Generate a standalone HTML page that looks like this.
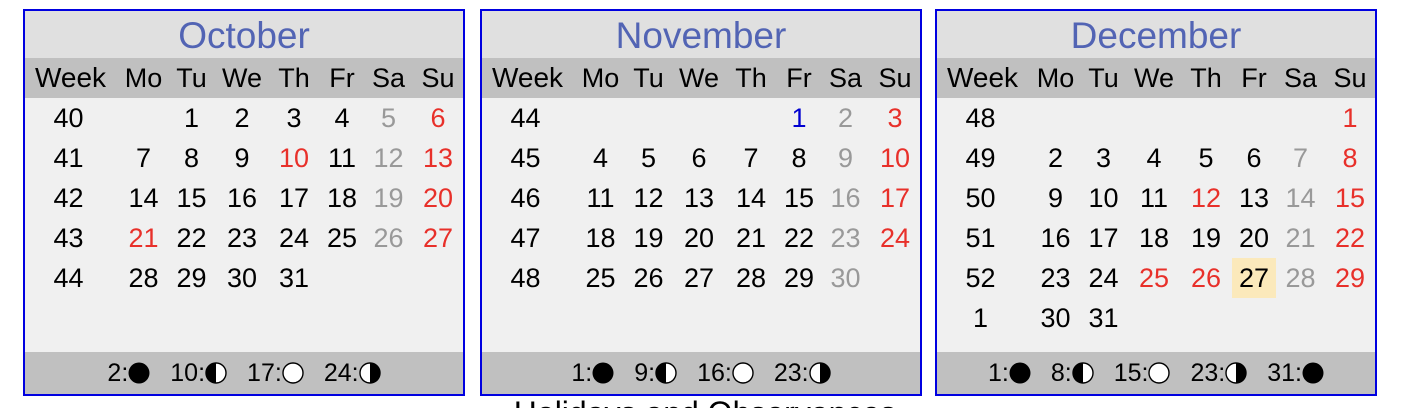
<!DOCTYPE html>
<html style="height:408px;overflow:hidden"><head><meta charset="utf-8"><style>
body{margin:0;width:1410px;height:408px;overflow:hidden;background:#fff;font-family:"Liberation Sans",Arial,sans-serif;position:relative}
.p{position:absolute;top:9px;width:438px;height:383px;border:2px solid #0000e0;background:#f0f0f0}
.t{height:47px;background:#e0e0e0;color:#5264b4;font-size:37px;text-align:center;line-height:50px}
table{border-collapse:collapse;table-layout:fixed;width:438px}
td{padding:0;text-align:center;font-size:27px;height:40px;line-height:40px;color:#000;white-space:nowrap;overflow:visible}
td:first-child{padding-right:8px}
tr.h td{background:#c0c0c0;height:40px;font-size:27px}
tr.h td:first-child{font-size:28px;padding-right:4px}
.r{color:#e8302a}.g{color:#999}.b{color:#0000d0}.hl{background:#fbe9bb}
.f{position:absolute;left:0;right:0;bottom:0;height:42px;background:#c0c0c0;text-align:center;font-size:25px;line-height:42px}
.f svg{vertical-align:-3px;margin-right:20px}
.bt{position:absolute;top:395px;left:0;width:1410px;text-align:center;font-size:32px}
</style></head><body>
<svg width="0" height="0" style="position:absolute"><defs>
<g id="n"><circle cx="11" cy="11" r="10.5" fill="#000"/></g>
<g id="fq"><circle cx="11" cy="11" r="10" fill="#fff" stroke="#000" stroke-width="1.4"/><path d="M11 1A10 10 0 0 0 11 21Z" fill="#000"/></g>
<g id="fu"><circle cx="11" cy="11" r="10" fill="#fff" stroke="#000" stroke-width="1.4"/></g>
<g id="lq"><circle cx="11" cy="11" r="10" fill="#fff" stroke="#000" stroke-width="1.4"/><path d="M11 1A10 10 0 0 1 11 21Z" fill="#000"/></g>
</defs></svg>

<div class="p" style="left:23px">
<div class="t">October</div>
<table><colgroup><col style="width:95px"><col style="width:47px"><col style="width:49px"><col style="width:52px"><col style="width:52px"><col style="width:44px"><col style="width:49px"><col style="width:50px"></colgroup>
<tr class="h"><td>Week</td><td>Mo</td><td>Tu</td><td>We</td><td>Th</td><td>Fr</td><td>Sa</td><td>Su</td></tr>
<tr><td>40</td><td></td><td>1</td><td>2</td><td>3</td><td>4</td><td class="g">5</td><td class="r">6</td></tr>
<tr><td>41</td><td>7</td><td>8</td><td>9</td><td class="r">10</td><td>11</td><td class="g">12</td><td class="r">13</td></tr>
<tr><td>42</td><td>14</td><td>15</td><td>16</td><td>17</td><td>18</td><td class="g">19</td><td class="r">20</td></tr>
<tr><td>43</td><td class="r">21</td><td>22</td><td>23</td><td>24</td><td>25</td><td class="g">26</td><td class="r">27</td></tr>
<tr><td>44</td><td>28</td><td>29</td><td>30</td><td>31</td><td></td><td></td><td></td></tr>
</table>
<div class="f">2:<svg width="22" height="22"><use href="#n"/></svg>10:<svg width="22" height="22"><use href="#fq"/></svg>17:<svg width="22" height="22"><use href="#fu"/></svg>24:<svg width="22" height="22" style="margin-right:0"><use href="#lq"/></svg></div>
</div>

<div class="p" style="left:480px">
<div class="t">November</div>
<table><colgroup><col style="width:95px"><col style="width:47px"><col style="width:49px"><col style="width:52px"><col style="width:52px"><col style="width:44px"><col style="width:49px"><col style="width:50px"></colgroup>
<tr class="h"><td>Week</td><td>Mo</td><td>Tu</td><td>We</td><td>Th</td><td>Fr</td><td>Sa</td><td>Su</td></tr>
<tr><td>44</td><td></td><td></td><td></td><td></td><td class="b">1</td><td class="g">2</td><td class="r">3</td></tr>
<tr><td>45</td><td>4</td><td>5</td><td>6</td><td>7</td><td>8</td><td class="g">9</td><td class="r">10</td></tr>
<tr><td>46</td><td>11</td><td>12</td><td>13</td><td>14</td><td>15</td><td class="g">16</td><td class="r">17</td></tr>
<tr><td>47</td><td>18</td><td>19</td><td>20</td><td>21</td><td>22</td><td class="g">23</td><td class="r">24</td></tr>
<tr><td>48</td><td>25</td><td>26</td><td>27</td><td>28</td><td>29</td><td class="g">30</td><td></td></tr>
</table>
<div class="f">1:<svg width="22" height="22"><use href="#n"/></svg>9:<svg width="22" height="22"><use href="#fq"/></svg>16:<svg width="22" height="22"><use href="#fu"/></svg>23:<svg width="22" height="22" style="margin-right:0"><use href="#lq"/></svg></div>
</div>

<div class="p" style="left:935px">
<div class="t">December</div>
<table><colgroup><col style="width:95px"><col style="width:47px"><col style="width:49px"><col style="width:52px"><col style="width:52px"><col style="width:44px"><col style="width:49px"><col style="width:50px"></colgroup>
<tr class="h"><td>Week</td><td>Mo</td><td>Tu</td><td>We</td><td>Th</td><td>Fr</td><td>Sa</td><td>Su</td></tr>
<tr><td>48</td><td></td><td></td><td></td><td></td><td></td><td></td><td class="r">1</td></tr>
<tr><td>49</td><td>2</td><td>3</td><td>4</td><td>5</td><td>6</td><td class="g">7</td><td class="r">8</td></tr>
<tr><td>50</td><td>9</td><td>10</td><td>11</td><td class="r">12</td><td>13</td><td class="g">14</td><td class="r">15</td></tr>
<tr><td>51</td><td>16</td><td>17</td><td>18</td><td>19</td><td>20</td><td class="g">21</td><td class="r">22</td></tr>
<tr><td>52</td><td>23</td><td>24</td><td class="r">25</td><td class="r">26</td><td class="hl">27</td><td class="g">28</td><td class="r">29</td></tr>
<tr><td>1</td><td>30</td><td>31</td><td></td><td></td><td></td><td></td><td></td></tr>
</table>
<div class="f">1:<svg width="22" height="22"><use href="#n"/></svg>8:<svg width="22" height="22"><use href="#fq"/></svg>15:<svg width="22" height="22"><use href="#fu"/></svg>23:<svg width="22" height="22"><use href="#lq"/></svg>31:<svg width="22" height="22" style="margin-right:0"><use href="#n"/></svg></div>
</div>

<div class="bt">Holidays and Observances</div>
</body></html>
